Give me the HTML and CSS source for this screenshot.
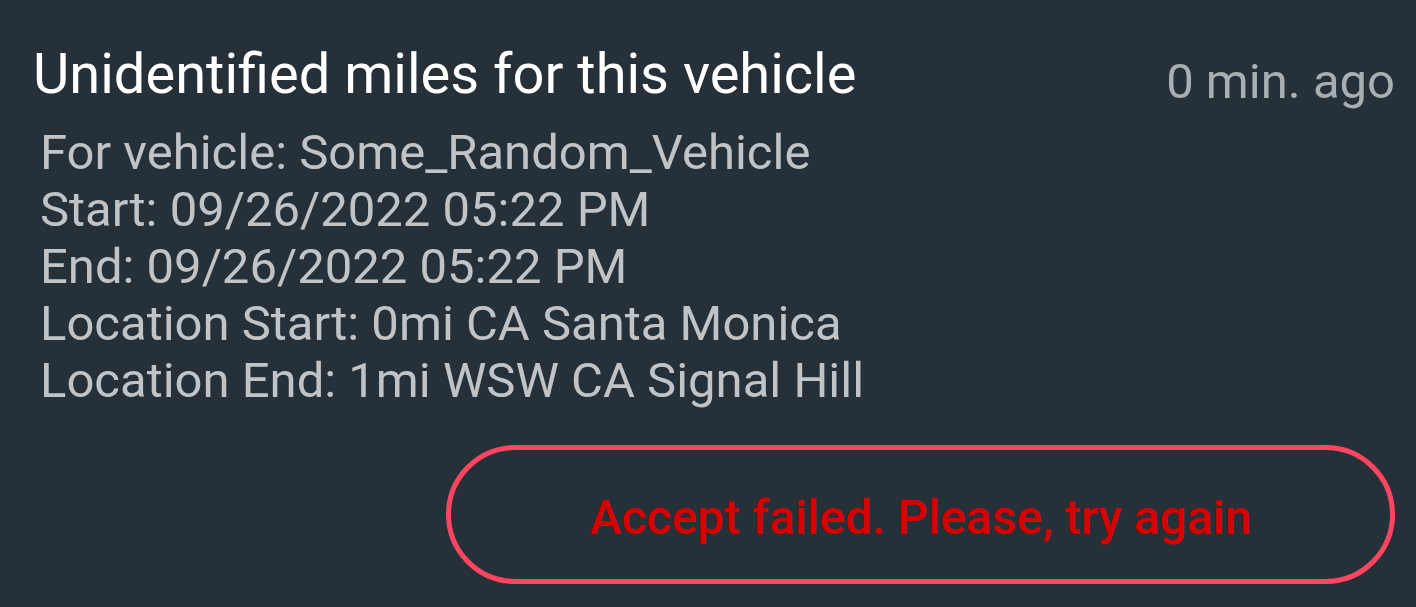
FILE: index.html
```html
<!DOCTYPE html>
<html>
<head>
<meta charset="utf-8">
<link rel="stylesheet" href="styles.css">
</head>
<body>
<div class="card">
  <div class="header">
    <h1 class="title">Unidentified miles for this vehicle</h1>
    <span class="time">0 min. ago</span>
  </div>
  <div class="details">
    <div class="line">For vehicle: Some_Random_Vehicle</div>
    <div class="line">Start: 09/26/2022 05:22 PM</div>
    <div class="line">End: 09/26/2022 05:22 PM</div>
    <div class="line">Location Start: 0mi CA Santa Monica</div>
    <div class="line">Location End: 1mi WSW CA Signal Hill</div>
  </div>
  <div class="actions">
    <button class="fail-btn">Accept failed. Please, try again</button>
  </div>
</div>
</body>
</html>
```
FILE: styles.css
```css
html, body {
  margin: 0;
  padding: 0;
  background: #263038;
  height: 100%;
}
body {
  font-family: Roboto, "Noto Sans", sans-serif;
  overflow: hidden;
}
.card {
  padding: 42px 21px 0 33px;
}
.header {
  display: flex;
  justify-content: space-between;
  align-items: flex-start;
}
.title {
  margin: 0;
  font-weight: 400;
  font-size: 56px;
  line-height: 64px;
  color: #ffffff;
}
.time {
  font-size: 49px;
  line-height: 64px;
  margin-top: 8px;
  color: #a7afb2;
}
.details {
  margin-top: 10px;
  padding-left: 7px;
  color: #c0c4c6;
  font-size: 49px;
  line-height: 57px;
}
.actions {
  display: flex;
  justify-content: flex-end;
  margin-top: 36px;
}
.fail-btn {
  width: 949px;
  height: 139px;
  box-sizing: border-box;
  border: 5px solid #ff4560;
  border-radius: 70px;
  background: transparent;
  color: #d50000;
  font-family: Roboto, "Noto Sans", sans-serif;
  font-size: 48px;
  font-weight: 500;
  padding: 5px 0 0 0;
}
```
